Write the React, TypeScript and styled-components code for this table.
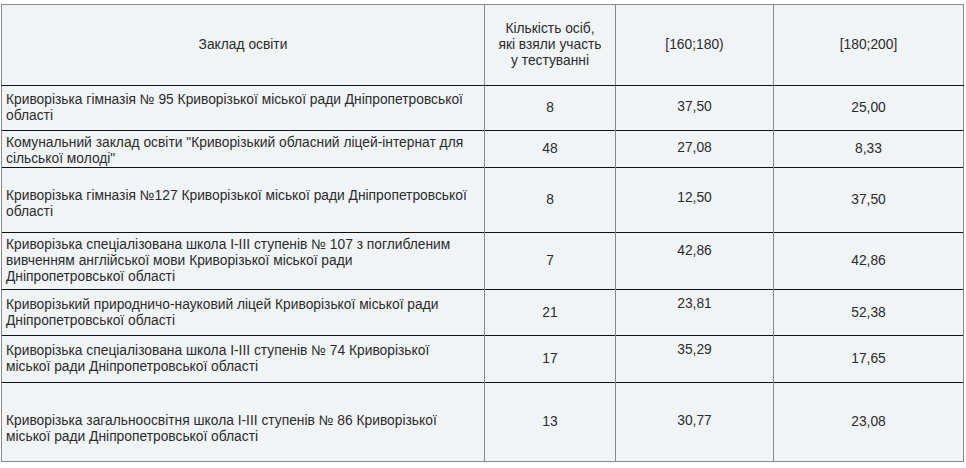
import React from "react";
import styled, { createGlobalStyle } from "styled-components";

const Global = createGlobalStyle`
  html, body { margin: 0; padding: 0; background: #ffffff; }
  body { font-family: "Liberation Sans", Arial, sans-serif; }
`;

const Page = styled.div`
  padding: 4px 3px 0 1px;
`;

const Table = styled.table`
  width: 963px;
  border-collapse: collapse;
  table-layout: fixed;
  background: #f1f4f7;
  border: 1px solid #8a8a8a;
  font-family: "Liberation Sans", Arial, sans-serif;
  font-size: 13.8px;
  line-height: 16px;
  color: #2b2b2b;
`;

const Row = styled.tr<{ $h: number }>`
  height: ${(p) => p.$h}px;
`;

const HeadCell = styled.th`
  font-weight: normal;
  text-align: center;
  vertical-align: middle;
  padding: 2px 4px;
  border-left: 1px solid #8a8a8a;
  border-right: 1px solid #8a8a8a;
  border-bottom: 1px solid #111111;
`;

const NameCell = styled.td<{ $top: number; $bottom: number }>`
  text-align: left;
  vertical-align: middle;
  padding: ${(p) => p.$top}px 4px ${(p) => p.$bottom}px 4px;
  border-left: 1px solid #8a8a8a;
  border-right: 1px solid #8a8a8a;
  border-top: 1px solid #111111;
`;

const NumCell = styled.td<{ $lift?: number }>`
  text-align: center;
  vertical-align: middle;
  padding: 1px 4px ${(p) => 1 + (p.$lift ?? 0) * 2}px 4px;
  border-left: 1px solid #8a8a8a;
  border-right: 1px solid #8a8a8a;
  border-top: 1px solid #111111;
`;

type Item = {
  lines: string[];
  count: string;
  a: string;
  b: string;
  h: number;
  top: number;
  bottom: number;
  lift: number;
};

const rows: Item[] = [
  {
    lines: ["Криворізька гімназія № 95 Криворізької міської ради Дніпропетровської", "області"],
    count: "8", a: "37,50", b: "25,00", h: 45, top: 2, bottom: 2, lift: 1,
  },
  {
    lines: ["Комунальний заклад освіти \"Криворізький обласний ліцей-інтернат для", "сільської молоді\""],
    count: "48", a: "27,08", b: "8,33", h: 37, top: 4, bottom: 0, lift: 1,
  },
  {
    lines: ["Криворізька гімназія №127 Криворізької міської ради Дніпропетровської", "області"],
    count: "8", a: "12,50", b: "37,50", h: 65, top: 10, bottom: 2, lift: 2,
  },
  {
    lines: [
      "Криворізька спеціалізована школа I-III ступенів № 107 з поглибленим",
      "вивченням англійської мови Криворізької міської ради",
      "Дніпропетровської області",
    ],
    count: "7", a: "42,86", b: "42,86", h: 57, top: 2, bottom: 2, lift: 10,
  },
  {
    lines: ["Криворізький природничо-науковий ліцей Криворізької міської ради", "Дніпропетровської області"],
    count: "21", a: "23,81", b: "52,38", h: 46, top: 2, bottom: 2, lift: 9,
  },
  {
    lines: ["Криворізька спеціалізована школа I-III ступенів № 74 Криворізької", "міської ради Дніпропетровської області"],
    count: "17", a: "35,29", b: "17,65", h: 47, top: 2, bottom: 2, lift: 9,
  },
  {
    lines: ["Криворізька загальноосвітня школа I-III ступенів № 86 Криворізької", "міської ради Дніпропетровської області"],
    count: "13", a: "30,77", b: "23,08", h: 79, top: 16, bottom: 2, lift: 1,
  },
];

function Lines({ lines }: { lines: string[] }) {
  return (
    <>
      {lines.map((l, i) => (
        <React.Fragment key={i}>
          {i > 0 && <br />}
          {l}
        </React.Fragment>
      ))}
    </>
  );
}

export default function App() {
  return (
    <Page>
      <Global />
      <Table>
        <colgroup>
          <col style={{ width: 483 }} />
          <col style={{ width: 131 }} />
          <col style={{ width: 158 }} />
          <col style={{ width: 190 }} />
        </colgroup>
        <thead>
          <Row $h={81}>
            <HeadCell>Заклад освіти</HeadCell>
            <HeadCell>
              Кількість осіб,
              <br />
              які взяли участь
              <br />у тестуванні
            </HeadCell>
            <HeadCell>[160;180)</HeadCell>
            <HeadCell>[180;200]</HeadCell>
          </Row>
        </thead>
        <tbody>
          {rows.map((r, i) => (
            <Row $h={r.h} key={i}>
              <NameCell $top={r.top} $bottom={r.bottom}>
                <Lines lines={r.lines} />
              </NameCell>
              <NumCell>{r.count}</NumCell>
              <NumCell $lift={r.lift}>{r.a}</NumCell>
              <NumCell>{r.b}</NumCell>
            </Row>
          ))}
        </tbody>
      </Table>
    </Page>
  );
}
